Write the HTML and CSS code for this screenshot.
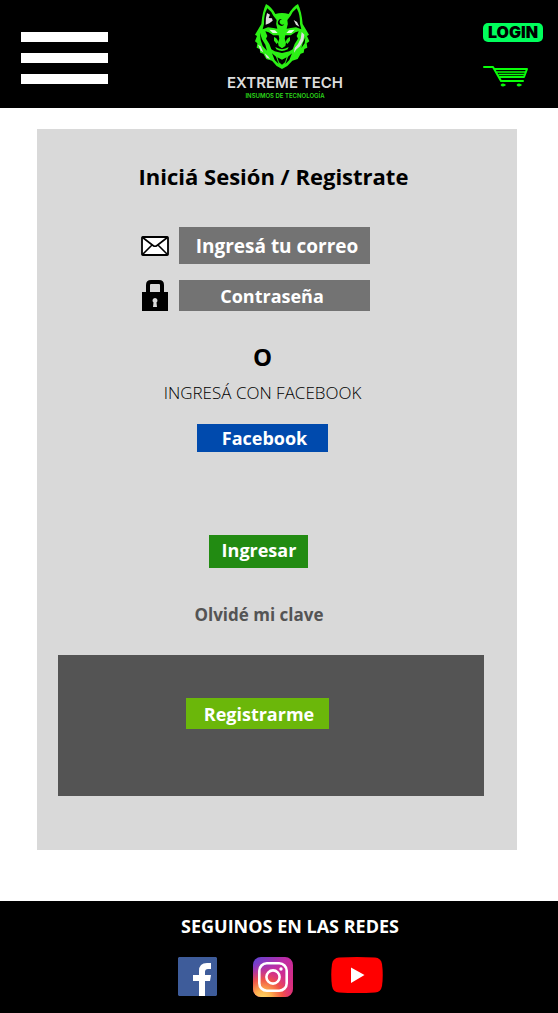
FILE: index.html
```html
<!DOCTYPE html>
<html lang="es">
<head>
<meta charset="utf-8">
<meta name="viewport" content="width=device-width, initial-scale=1">
<title>Extreme Tech - Iniciá Sesión</title>
<link rel="stylesheet" href="styles.css">
</head>
<body>
<header class="header">
  <button class="burger" type="button" aria-label="Menú"><span class="bar"></span><span class="bar"></span><span class="bar"></span></button>
  <a class="brand" href="#">
    <svg class="wolf" viewBox="0 0 192 216" aria-hidden="true">
      <path fill="#2cf015" d="M48 12 Q66 22 76 42 Q96 36 116 42 Q127 22 144 12 Q155 35 158 72 L177 104 L171 108 L178 124 L170 130 L172 143 L163 147 L161 158 L152 161 L143 177 L127 182 L112 198 L96 207 L80 198 L66 182 L49 177 L40 161 L31 158 L29 147 L20 143 L22 130 L15 124 L21 108 L15 104 L34 72 Q37 35 48 12Z"/>
      <path d="M52 25 Q64 34 70 47 L80 60 Q76 72 82 86 L70 84 L54 82 L38 88 L42 72 Q41 44 52 25Z M140 25 Q128 34 122 47 L112 60 Q116 72 110 86 L122 84 L138 82 L154 88 L150 72 Q151 44 140 25Z"/>
      <path fill="#ddd" d="M51 39 L60 44 L56 54 L66 55 L68 62 L58 70 L47 74 Q46 54 51 39Z M131 60 L141 66 L148 80 L138 74Z"/>
      <path d="M46 94 L56 97 L70 106 L86 106 L88 116 L84 128 L86 138 L96 145 L106 138 L108 128 L104 116 L106 106 L122 106 L136 97 L146 94 L140 108 L144 116 L134 132 L128 148 L118 154 L96 159 L74 154 L64 148 L58 132 L48 116 L52 108Z"/>
      <path fill="#2cf015" d="M72 111 Q82 114 85 126 L80 132 L72 122Z M120 111 Q110 114 107 126 L112 132 L120 122Z M76 141 Q96 154 116 141 L113 148 Q96 158 79 148Z"/>
      <path fill="#ddd" d="M155 96 L163 104 L160 122 L150 139 L138 149 L132 158 L134 144 L144 132 L152 116Z M24 134 L32 139 L40 157 L32 152Z M44 160 L54 168 L60 177 L50 173Z"/>
      <path d="M30 98 L36 118 L46 134 L51 152 L38 138 L32 120Z M82 172 L96 179 L110 172 L105 187 L96 194 L87 187Z M66 160 L78 170 L86 192 L74 180Z M126 160 L114 170 L106 192 L118 180Z M166 112 L164 130 L154 144 L158 130Z"/>
      <path fill="#e4ffe0" d="M58 89 L75 91 L83 99 L68 99Z M134 89 L117 91 L109 99 L124 99Z"/>
      <path d="M97 58 A10 10 0 1 0 103 71 A8 8 0 1 1 97 58Z"/>
    </svg>
    <span class="brand-name">EXTREME TECH</span>
    <span class="brand-line">INSUMOS DE TECNOLOGÍA</span>
  </a>
  <div class="tools">
    <a class="login" href="#">LOGIN</a>
    <a class="cart" href="#" aria-label="Carrito">
      <svg viewBox="0 0 46 22" width="46" height="22" fill="none" stroke="#0aff0a" stroke-width="2" stroke-linecap="round" stroke-linejoin="round" aria-hidden="true">
        <path d="M1 1H10L18 15H40M12 3H44L41 11H17"/>
        <path stroke-width="1.500" d="M14 6H42M16 8.500H41"/>
        <ellipse cx="20" cy="19" rx="2" ry="1" fill="#0aff0a" stroke-width="1"/>
        <ellipse cx="36" cy="19" rx="2" ry="1" fill="#0aff0a" stroke-width="1"/>
      </svg>
    </a>
  </div>
</header>

<main class="card">
  <h1 class="title">Iniciá Sesión / Registrate</h1>
  <form class="form">
    <label class="icon" for="correo" aria-label="Correo">
      <svg viewBox="0 0 28 20" width="28" height="20" aria-hidden="true">
        <rect x="1" y="1" width="26" height="18" rx="1" fill="#fff" stroke="#000" stroke-width="1.800"/>
        <path d="M1 1L12 9.500Q14 11 16 9.500L27 1M1 19L11 9M27 19L17 9" fill="none" stroke="#000" stroke-width="1.600"/>
      </svg>
    </label>
    <input class="field field-mail" id="correo" type="email" placeholder="Ingresá tu correo">
    <label class="icon" for="clave" aria-label="Contraseña">
      <svg viewBox="0 0 28 31" width="28" height="31" aria-hidden="true">
        <path d="M7 14V5Q7 2 10 2H18Q21 2 21 5V14" fill="none" stroke="#000" stroke-width="4"/>
        <path d="M1 12H27V31H1Z"/>
        <path d="M14 18A2.500 2.500 0 0 1 15.500 22.500L16 27H12L12.500 22.500A2.500 2.500 0 0 1 14 18Z" fill="#d9d9d9"/>
      </svg>
    </label>
    <input class="field field-pass" id="clave" type="password" placeholder="Contraseña">
  </form>
  <section class="social">
    <p class="or">O</p>
    <p class="with">INGRESÁ CON FACEBOOK</p>
    <button class="btn btn-facebook" type="button">Facebook</button>
  </section>
  <section class="actions">
    <button class="btn btn-enter" type="button">Ingresar</button>
    <a class="forgot" href="#">Olvidé mi clave</a>
  </section>
  <section class="register">
    <button class="btn btn-register" type="button">Registrarme</button>
  </section>
</main>

<footer class="footer">
  <h2 class="follow">SEGUINOS EN LAS REDES</h2>
  <nav class="networks" aria-label="Redes">
    <a href="#" aria-label="Facebook">
      <svg viewBox="0 0 39 39" width="39" height="39"><path fill="#3e5c9a" d="M1 0H38L39 1V38L38 39H1L0 38V1Z"/><path fill="#fff" d="M21 39V24H15V18H21V14Q21 6 29 6H33V12H30Q27 12 27 15V18H33L32 24H27V39Z"/></svg>
    </a>
    <a href="#" aria-label="Instagram">
      <svg viewBox="0 0 40 40" width="40" height="40">
        <defs>
          <linearGradient id="ig-base" x1="0" y1="0" x2="1" y2="1"><stop offset="0" stop-color="#5b45d6"/><stop offset=".45" stop-color="#c32aa3"/><stop offset="1" stop-color="#e0306c"/></linearGradient>
          <radialGradient id="ig-warm" cx=".25" cy="1.050" r=".9"><stop offset="0" stop-color="#ffdc6a"/><stop offset=".25" stop-color="#fdb04e"/><stop offset=".55" stop-color="#f4573f" stop-opacity=".9"/><stop offset="1" stop-color="#d6249f" stop-opacity="0"/></radialGradient>
        </defs>
        <rect width="40" height="40" rx="8" fill="url(#ig-base)"/><rect width="40" height="40" rx="8" fill="url(#ig-warm)"/>
        <g fill="none" stroke="#fff" stroke-width="2.600"><rect x="6.300" y="6.300" width="27.400" height="27.400" rx="7.500"/><circle cx="20" cy="20" r="6.600"/></g>
        <circle cx="28" cy="12" r="1.700" fill="#fff"/>
      </svg>
    </a>
    <a class="youtube" href="#" aria-label="YouTube">
      <svg viewBox="0 0 52 37" width="52" height="37"><path fill="#f00" d="M8 .5Q26 -.5 44 .5Q50 1 51 7Q52.500 18 51 29Q50 35 44 35.500Q26 36.500 8 35.500Q2 35 1 29Q-.5 18 1 7Q2 1 8 .5Z"/><path fill="#fff" d="M20 10.500L33.500 18L20 26Z"/></svg>
    </a>
  </nav>
</footer>
</body>
</html>
```
FILE: styles.css
```css
* { box-sizing: border-box; }

body {
  margin: 0;
  min-height: 100vh;
  display: flex;
  flex-direction: column;
  background: #fff;
  color: #000;
  font-family: "Open Sans", "Noto Sans", sans-serif;
}

h1, h2, p { margin: 0; }
a { color: inherit; text-decoration: none; }
svg { display: block; }

.header {
  display: grid;
  grid-template-columns: 1fr auto 1fr;
  min-height: 108px;
  padding: 0 9px 0 21px;
  background: #000;
}

.burger {
  display: flex;
  flex-direction: column;
  gap: 11px;
  width: 87px;
  margin: 32px 0 0;
  padding: 0;
  border: 0;
  background: none;
  align-self: start;
  cursor: pointer;
}
.bar { width: 100%; height: 10px; background: #fff; }

.brand {
  display: flex;
  flex-direction: column;
  align-items: center;
  font-family: Inter, sans-serif;
}
.wolf { width: 64px; height: 72px; margin-right: 6px; }
.brand-name {
  margin-top: 2px;
  color: #ddd;
  font-size: 15px;
  line-height: 18px;
  font-weight: 600;
  white-space: nowrap;
}
.brand-line {
  color: #2cd81a;
  font-size: 6px;
  line-height: 8px;
  font-weight: 600;
  white-space: nowrap;
}

.tools {
  justify-self: end;
  display: flex;
  flex-direction: column;
  align-items: flex-start;
  gap: 24px;
  padding: 23px 6px 0 0;
}
.login {
  width: 60px;
  border-radius: 5px;
  background: #00ff5c;
  color: #000;
  font-family: Inter, sans-serif;
  font-size: 16px;
  line-height: 19px;
  font-weight: 900;
  text-align: center;
}

.card {
  display: flex;
  flex-direction: column;
  align-items: center;
  margin: 21px 41px 51px 37px;
  padding: 32px 33px 54px 21px;
  background: #d9d9d9;
}

.title {
  padding-left: 5px;
  font-size: 22px;
  line-height: 30px;
  font-weight: 700;
  white-space: nowrap;
}

.form {
  display: grid;
  grid-template-columns: 28px 191px;
  align-items: center;
  gap: 16px 10px;
  margin-top: 36px;
  padding-right: 31px;
}
.field {
  width: 100%;
  border: 0;
  border-radius: 0;
  background: #737373;
  color: #fff;
  font: 700 18px/24px "Open Sans", "Noto Sans", sans-serif;
  text-align: center;
}
.field::placeholder { color: #fff; opacity: 1; }
.field-mail { height: 37px; padding: 0 0 0 5px; font-size: 19px; }
.field-pass { height: 31px; padding: 0 5px 0 0; }

.social {
  display: flex;
  flex-direction: column;
  align-items: center;
  margin-top: 30px;
  padding-right: 17px;
}
.or { font-size: 24px; line-height: 32px; font-weight: 700; }
.with { margin-top: 8px; font-size: 17px; line-height: 24px; font-weight: 300; }

.btn {
  padding: 0;
  border: 0;
  color: #fff;
  font: 700 18px/24px "Open Sans", "Noto Sans", sans-serif;
  text-align: center;
  cursor: pointer;
}
.btn-facebook { width: 131px; height: 28px; margin-top: 19px; padding-left: 4px; background: #004aad; }

.actions {
  display: flex;
  flex-direction: column;
  align-items: center;
  margin-top: 83px;
  padding-right: 24px;
}
.btn-enter { width: 99px; height: 33px; padding-bottom: 4px; background: #228b12; }
.forgot { margin-top: 35px; color: #545454; font-size: 17px; line-height: 24px; font-weight: 700; }

.register {
  align-self: stretch;
  display: flex;
  justify-content: center;
  margin-top: 28px;
  padding: 43px 28px 67px 0;
  background: #545454;
}
.btn-register { width: 143px; height: 31px; padding-left: 4px; background: #6bb70a; }

.footer {
  flex: 1;
  display: flex;
  flex-direction: column;
  align-items: center;
  padding: 13px 0 16px;
  background: #000;
}
.follow {
  padding-left: 22px;
  color: #fff;
  font-size: 18px;
  line-height: 24px;
  font-weight: 700;
}
.networks {
  display: flex;
  gap: 36px;
  margin-top: 19px;
  padding-left: 2px;
}
.youtube { margin-left: 2px; }
```
